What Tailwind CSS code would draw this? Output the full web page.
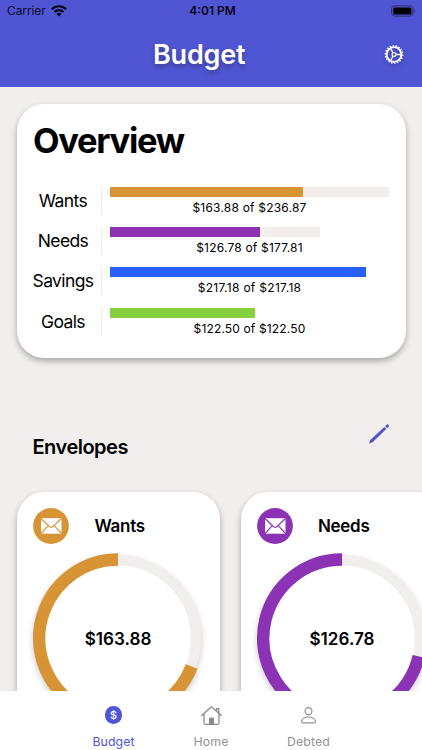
<!DOCTYPE html>
<html lang="en">
<head>
<meta charset="utf-8">
<meta name="viewport" content="width=device-width, initial-scale=1">
<title>Budget</title>
<script src="https://cdn.jsdelivr.net/npm/@tailwindcss/browser@4"></script>
</head>
<body class="flex h-[750px] w-[422px] flex-col overflow-hidden bg-[#f1eeed] font-['Inter','Liberation_Sans',sans-serif] text-black">
  <header class="h-[87px] shrink-0 bg-[#5056d3]">
    <div class="grid h-[22px] grid-cols-3 items-center pr-[6px] pl-[7px] text-[12px]">
      <div class="flex items-center gap-[5px] text-[#0c0c2c]">
        <span class="text-[12px] tracking-[-0.1px]">Carrier</span>
        <svg class="h-[12px] w-[16px]" viewBox="0 0 16 12" fill="none" stroke="#050518" stroke-width="2.2"><path d="M.9 4.2a10 10 0 0 1 14.200 0M3.500 7a6.300 6.300 0 0 1 9 0"/><path d="M8 11.500 5.500 9a3.500 3.500 0 0 1 5 0z" fill="#050518" stroke="none"/></svg>
      </div>
      <div class="text-center text-[12px] font-semibold text-[#050518]"><span class="-mr-[2px]">4:01 PM</span></div>
      <svg class="h-[12px] w-[25px] justify-self-end" viewBox="0 0 25 12"><rect x=".6" y=".9" width="21.500" height="10.200" rx="3" fill="none" stroke="#2a2d73"/><rect x="2.200" y="2.500" width="18.300" height="7" rx="1.500" fill="#000"/><path d="M23.300 4.500v3c1-.4 1-2.600 0-3" fill="#2a2d73"/></svg>
    </div>
    <div class="flex h-[65px] items-center justify-between pr-[17px] pl-[153px]">
      <h1 class="text-[27px] leading-[34px] font-semibold tracking-[-0.2px] text-white [text-shadow:0_3px_5px_rgba(0,0,0,.3)]">Budget</h1>
      <svg class="size-[22px] drop-shadow-[0_2px_2px_rgba(0,0,0,.25)]" viewBox="0 0 22 22" fill="none" stroke="#fff"><circle cx="11" cy="10.500" r="7.300" stroke-width="1.800"/><circle cx="11" cy="10.500" r="8.700" stroke-width="1.300" pathLength="36" stroke-dasharray="1.100 .9"/><circle cx="11" cy="10.500" r="1.900" stroke-width="1.200"/><path d="M13 10.500h5.300M10 8.700 7.300 4.200M10 12.300l-2.700 4.500" stroke-width="1.300"/></svg>
    </div>
  </header>

  <main class="min-h-0 flex-1 overflow-hidden px-[16.500px] pt-[17px]">
    <section class="h-[254px] w-[389px] rounded-[27px] bg-white px-[16.500px] pt-[16px] shadow-[0_3px_6px_rgba(0,0,0,.3)]">
      <h2 class="h-[62px] text-[34.500px] leading-[42px] font-bold tracking-[-1.3px]">Overview</h2>
      <div class="grid auto-rows-[40.400px] grid-cols-[60px_8.500px_279.500px] pt-[4.500px] text-[12px]">
        <div class="h-[28px] text-center text-[17.500px] leading-[28px] tracking-[-0.600px]">Wants</div>
        <div class="h-[28px] border-r border-[#eeeced]"></div>
        <div class="pl-[8.500px]"><div class="h-[10px] w-[279px] bg-[#f1eeed]"><div class="h-full w-[193px] bg-[#d69434]"></div></div><div class="w-[279px] text-center leading-[22px] tracking-[.2px]">$163.88 of $236.87</div></div>

        <div class="h-[28px] text-center text-[17.500px] leading-[28px] tracking-[-0.600px]">Needs</div>
        <div class="h-[28px] border-r border-[#eeeced]"></div>
        <div class="pl-[8.500px]"><div class="h-[10px] w-[209.500px] bg-[#f1eeed]"><div class="h-full w-[149.500px] bg-[#8c32b5]"></div></div><div class="w-[279px] text-center leading-[22px] tracking-[.2px]">$126.78 of $177.81</div></div>

        <div class="flex h-[28px] justify-center text-[17.500px] leading-[28px] tracking-[-0.600px]">Savings</div>
        <div class="h-[28px] border-r border-[#eeeced]"></div>
        <div class="pl-[8.500px]"><div class="h-[10px] w-[256px] bg-[#285ff5]"></div><div class="w-[279px] text-center leading-[22px] tracking-[.3px]">$217.18 of $217.18</div></div>

        <div class="h-[28px] text-center text-[17.500px] leading-[28px] tracking-[-0.600px]">Goals</div>
        <div class="h-[28px] border-r border-[#eeeced]"></div>
        <div class="pl-[8.500px]"><div class="h-[10px] w-[144.500px] bg-[#86cf3e]"></div><div class="w-[279px] text-center leading-[22px] tracking-[.150px]">$122.50 of $122.50</div></div>
      </div>
    </section>

    <div class="flex h-[134px] items-start justify-between px-[16px] pt-[65px]">
      <h3 class="pt-[10px] text-[20px] leading-[28px] font-semibold tracking-[-0.5px]">Envelopes</h3>
      <svg class="h-[22px] w-[22px]" viewBox="0 0 22 22" fill="#5056d3"><path d="m1 20.500 1.300-3.600L16.300 3.900l2 2L4.600 19.200zM17.200 3.200l1.600-1.600q.7-.6 1.400 0l.6.600q.6.700 0 1.400l-1.600 1.600z"/></svg>
    </div>

    <div class="flex gap-[20.500px]">
      <article class="h-[300px] w-[203.500px] shrink-0 rounded-[27px] bg-white px-[16px] pt-[16px] shadow-[0_3px_6px_rgba(0,0,0,.3)]">
        <div class="flex items-center">
          <svg class="size-[36px]" viewBox="0 0 36 36"><circle cx="18" cy="18" r="17.900" fill="#d69434"/><path d="M8 10.200h20.500v15.500H8z" fill="#fff"/><path d="m8 10.500 8.400 8q1.800 1.500 3.600 0l8.500-8M8 25.500l7.300-7.800m13.200 7.800-7.300-7.800" fill="none" stroke="#d69434" stroke-width="1.100"/></svg>
          <h4 class="w-[100px] pl-[26px] text-[17px] leading-[24px] font-semibold tracking-[-0.3px]">Wants</h4>
        </div>
        <div class="mt-[8.500px] -ml-px grid w-[172px] place-items-center">
          <svg class="col-start-1 row-start-1 size-[172px] overflow-visible drop-shadow-[0_3px_3px_rgba(0,0,0,.2)]" viewBox="0 0 172 172" fill="none"><circle cx="86" cy="85.300" r="78" fill="#fff" stroke="#f1eeed" stroke-width="10.500"/><circle cx="86" cy="85.300" r="78.800" stroke="#d69434" stroke-width="12.500" pathLength="360" stroke-dasharray="249.100 360" transform="rotate(20.900 86 85.300)"/></svg>
          <span class="z-10 col-start-1 row-start-1 pl-px text-[17.100px] font-semibold">$163.88</span>
        </div>
      </article>
      <article class="h-[300px] w-[203.500px] shrink-0 rounded-[27px] bg-white px-[16px] pt-[16px] shadow-[0_3px_6px_rgba(0,0,0,.3)]">
        <div class="flex items-center">
          <svg class="size-[36px]" viewBox="0 0 36 36"><circle cx="18" cy="18" r="17.900" fill="#8c32b5"/><path d="M8 10.200h20.500v15.500H8z" fill="#fff"/><path d="m8 10.500 8.400 8q1.800 1.500 3.600 0l8.500-8M8 25.500l7.300-7.800m13.200 7.800-7.300-7.800" fill="none" stroke="#8c32b5" stroke-width="1.100"/></svg>
          <h4 class="w-[100px] pl-[25.500px] text-[17px] leading-[24px] font-semibold tracking-[-0.3px]">Needs</h4>
        </div>
        <div class="mt-[8.500px] -ml-px grid w-[172px] place-items-center">
          <svg class="col-start-1 row-start-1 size-[172px] overflow-visible drop-shadow-[0_3px_3px_rgba(0,0,0,.2)]" viewBox="0 0 172 172" fill="none"><circle cx="86" cy="85.300" r="78" fill="#fff" stroke="#f1eeed" stroke-width="10.500"/><circle cx="86" cy="85.300" r="78.800" stroke="#8c32b5" stroke-width="12.500" pathLength="360" stroke-dasharray="256.700 360" transform="rotate(13.300 86 85.300)"/></svg>
          <span class="z-10 col-start-1 row-start-1 pl-px text-[17.100px] font-semibold">$126.78</span>
        </div>
      </article>
    </div>
  </main>

  <nav class="flex h-[59.500px] shrink-0 justify-center bg-white text-[12.300px] leading-[16px] tracking-[.1px] text-[#929294]">
    <div class="flex w-[97.500px] flex-col items-center gap-[7px] pt-[13px] text-[#5056d3]">
      <div class="flex h-[23px] items-center"><span class="grid size-[17.500px] place-items-center rounded-full bg-[#5056d3] text-[11px] leading-none font-medium tracking-normal text-white">$</span></div>
      <span>Budget</span>
    </div>
    <div class="flex w-[97.500px] flex-col items-center gap-[7px] pt-[13px]">
      <svg class="size-[23px]" viewBox="0 0 23 23" fill="none" stroke="#8c8c8f" stroke-width="1.300" stroke-linejoin="round" stroke-linecap="round"><path d="m1.700 11.500 9.200-8.300q.6-.5 1.200 0l9.200 8.300M4 9.800v9q0 1.500 1.500 1.500h12q1.500 0 1.500-1.500v-9M16.600 6.800V4.700h2.200v4.200"/><path d="M9 20v-6.300h5V20z" fill="#8c8c8f" stroke="none"/></svg>
      <span>Home</span>
    </div>
    <div class="flex w-[97.500px] flex-col items-center gap-[7px] pt-[13px]">
      <svg class="size-[23px]" viewBox="0 0 23 23" fill="none" stroke="#929294" stroke-width="1.200"><ellipse cx="11.500" cy="7.300" rx="3.400" ry="3.600"/><path d="M6.600 18.800h9.800q2.200 0 2-1.600c-.5-2.500-3.300-4.200-6.900-4.200s-6.400 1.700-6.900 4.200q-.2 1.600 2 1.600z"/></svg>
      <span>Debted</span>
    </div>
  </nav>
</body>
</html>
